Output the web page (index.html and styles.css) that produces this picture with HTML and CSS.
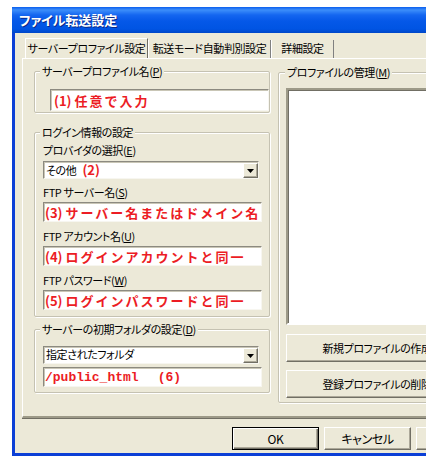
FILE: index.html
```html
<!DOCTYPE html>
<html lang="ja">
<head>
<meta charset="utf-8">
<title>ファイル転送設定</title>
<link rel="stylesheet" href="styles.css">
</head>
<body>
<div class="window">
  <div class="titlebar">ファイル転送設定</div>
  <div class="frame">
    <div class="tabs">
      <div class="tab active">サーバープロファイル設定</div>
      <div class="tab t2">転送モード自動判別設定</div>
      <div class="tab t3">詳細設定</div>
    </div>
    <div class="panel">
      <div class="col-left">
        <div class="group g1">
          <div class="legend">サーバープロファイル名(<u>P</u>)</div>
          <div class="field red"><span class="num">(1)</span>任意で入力</div>
        </div>
        <div class="group g2">
          <div class="legend">ログイン情報の設定</div>
          <div class="label l1">プロバイダの選択(<u>E</u>)</div>
          <div class="select"><span class="val">その他 <b class="redsm">(2)</b></span><span class="arrow"><svg width="7" height="4" viewBox="0 0 7 4"><path d="M0 0h7L3.5 4z" fill="#000"/></svg></span></div>
          <div class="label">FTP サーバー名(<u>S</u>)</div>
          <div class="field red wide"><span class="num">(3)</span>サーバー名またはドメイン名</div>
          <div class="label lb">FTP アカウント名(<u>U</u>)</div>
          <div class="field red wide"><span class="num">(4)</span>ログインアカウントと同一</div>
          <div class="label lb">FTP パスワード(<u>W</u>)</div>
          <div class="field red wide"><span class="num">(5)</span>ログインパスワードと同一</div>
        </div>
        <div class="group g3">
          <div class="legend">サーバーの初期フォルダの設定(<u>D</u>)</div>
          <div class="select s3"><span class="val">指定されたフォルダ</span><span class="arrow"><svg width="7" height="4" viewBox="0 0 7 4"><path d="M0 0h7L3.5 4z" fill="#000"/></svg></span></div>
          <div class="field red wide mono f6">/public_html<span class="six">(6)</span></div>
        </div>
      </div>
      <div class="col-right">
        <div class="group gr">
          <div class="legend lr">プロファイルの管理(<u>M</u>)</div>
          <div class="listbox"></div>
          <div class="btn big b1">新規プロファイルの作成</div>
          <div class="btn big b2">登録プロファイルの削除</div>
        </div>
      </div>
    </div>
    <div class="buttons">
      <div class="btn dlg default">OK</div>
      <div class="btn dlg">キャンセル</div>
      <div class="btn dlg"></div>
    </div>
  </div>
</div>
</body>
</html>
```
FILE: styles.css
```css
* { box-sizing: border-box; }
body {
  margin: 0;
  background: #fff;
  overflow: hidden;
  font-family: "Noto Sans CJK JP", "Noto Sans", sans-serif;
  font-size: 11px;
  letter-spacing: -0.4px;
  color: #000;
  font-feature-settings: "palt";
}
.window {
  margin: 7px 0 0 12px;
  width: 414px;
  height: 449px;
  overflow: hidden;
  display: flex;
  flex-direction: column;
}
.titlebar {
  flex: none;
  height: 26px;
  line-height: 26px;
  padding-left: 7px;
  color: #fff;
  font-weight: bold;
  font-size: 13px;
  letter-spacing: 0;
  background: linear-gradient(#0A5EEE 0, #3C8EFA 3px, #1466F0 8px, #0558E8 14px, #0054E3 22px, #0047C8 26px);
  text-shadow: 1px 1px 0 #0A2A8A;
}
.frame {
  flex: 1;
  background: #ECE9D8;
  border-left: 3px solid #0B3FD6;
  border-bottom: 3px solid #0B3FD6;
  padding: 5px 0 0 7px;
}
.tabs {
  display: flex;
  align-items: flex-end;
  height: 20px;
  margin-left: 3px;
}
.tab {
  height: 18px;
  line-height: 17px;
  text-align: center;
  border-left: 1px solid #fff;
  border-right: 1px solid #808080;
  width: 123px;
  white-space: nowrap;
}
.tab.active {
  height: 20px;
  line-height: 18px;
  border-top: 1px solid #fff;
  border-right: 1px solid #716F64;
}
.tab.t3 { width: 63px; }
.panel {
  width: 440px;
  height: 360px;
  border-top: 1px solid #fff;
  border-left: 1px solid #fff;
  border-bottom: 2px solid #9D9A88;
  box-shadow: 0 1px 0 #716F64;
  padding: 12px 0 0 11px;
  display: flex;
  gap: 8px;
  align-items: flex-start;
}
.col-left {
  width: 236px;
  flex: none;
  display: flex;
  flex-direction: column;
}
.col-right {
  width: 210px;
  flex: none;
}
.group {
  border: 1px solid #C5C2B2;
  box-shadow: inset 1px 1px 0 #fff, 1px 1px 0 #fff;
  border-radius: 2px;
}
.legend {
  width: fit-content;
  margin-top: -8px;
  padding: 0 2px;
  line-height: 14px;
  height: 14px;
  background: #ECE9D8;
  white-space: nowrap;
}
.g1 { padding: 0 0 1px 15px; }
.g1 .legend { margin-left: -10px; }
.g2 { margin-top: 19px; padding: 0 0 6px 8px; }
.g2 .legend, .g3 .legend { margin-left: -3px; }
.g3 { margin-top: 12px; padding: 0 0 5px 8px; }
.gr { margin-top: 1px; padding: 0 0 4px 7px; height: 331px; }
.gr .legend { margin-left: -1px; }
.label {
  line-height: 14px;
  height: 14px;
  margin-top: 6px;
  white-space: nowrap;
}
.label.l1 { margin-top: 4px; }
.label.lb { margin-top: 7px; }
.field {
  background: #fff;
  border: 1px solid;
  border-color: #8C8A80 #F7F6F0 #F7F6F0 #8C8A80;
  box-shadow: inset 1px 1px 0 #C9C6B6;
  display: flex;
  align-items: center;
  white-space: nowrap;
  overflow: hidden;
}
.g1 .field { height: 22px; margin-top: 11px; padding-left: 3px; }
.field.wide { width: 219px; height: 20px; margin-top: 3px; padding-left: 1px; }
.red {
  color: #EC1C24;
  font-weight: bold;
  font-size: 13px;
  letter-spacing: 2px;
  font-feature-settings: normal;
}
.num { letter-spacing: 0; margin-right: 3px; }
.redsm {
  color: #EC1C24;
  font-size: 13px;
  letter-spacing: 0;
  margin-left: 4px;
  font-feature-settings: normal;
}
.mono {
  font-family: "Liberation Mono", monospace;
  letter-spacing: 0;
}
.f6 { margin-top: 11px; padding-left: 2px; }
.six { margin-left: 19px; }
.select {
  width: 216px;
  height: 18px;
  margin-top: 4px;
  background: #fff;
  border: 1px solid;
  border-color: #8C8A80 #F7F6F0 #F7F6F0 #8C8A80;
  box-shadow: inset 1px 1px 0 #C9C6B6;
  display: flex;
  align-items: stretch;
}
.select.s3 { margin-top: 10px; }
.select .val {
  flex: 1;
  padding-left: 2px;
  line-height: 15px;
  white-space: nowrap;
}
.arrow {
  width: 15px;
  margin: 1px 0 0 0;
  background: #ECE9D8;
  border: 1px solid;
  border-color: #fff #716F64 #716F64 #fff;
  box-shadow: inset -1px -1px 0 #ACA899;
  display: flex;
  align-items: center;
  justify-content: center;
}
.listbox {
  margin-top: 9px;
  height: 237px;
  background: #fff;
  border: 2px solid;
  border-color: #9D9A88 #fff #fff #9D9A88;
  box-shadow: inset 1px 1px 0 #716F64;
}
.btn {
  background: #ECE9D8;
  border: 1px solid;
  border-color: #fff #716F64 #716F64 #fff;
  box-shadow: inset -1px -1px 0 #ACA899;
  display: flex;
  align-items: center;
  justify-content: center;
  white-space: nowrap;
}
.btn.big { width: 182px; height: 28px; }
.b1 { margin-top: 9px; }
.b2 { margin-top: 8px; }
.buttons {
  display: flex;
  gap: 5px;
  margin-top: 9px;
  padding-left: 210px;
}
.btn.dlg { width: 87px; height: 23px; flex: none; font-size: 12px; }
.btn.default {
  border: 1px solid #000;
  box-shadow: inset 1px 1px 0 #fff, inset -1px -1px 0 #716F64, inset -2px -2px 0 #ACA899;
}
```
